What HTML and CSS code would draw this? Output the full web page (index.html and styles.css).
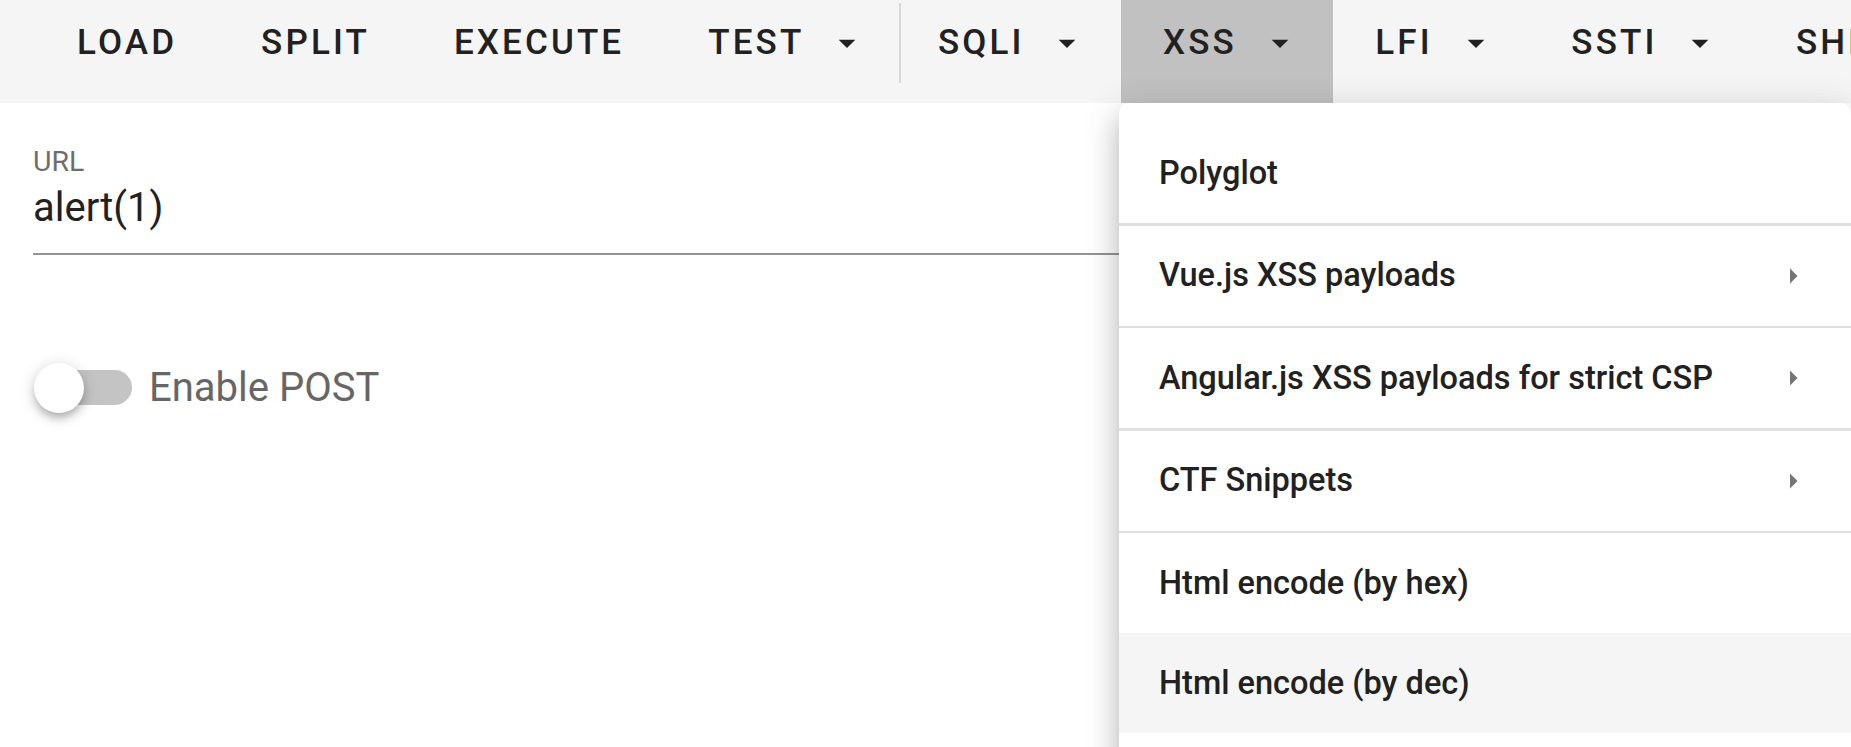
FILE: index.html
```html
<!DOCTYPE html>
<html lang="en">
<head>
<meta charset="utf-8">
<title>HackBar</title>
<link rel="stylesheet" href="styles.css">
</head>
<body>
<header class="toolbar">
  <button class="tb-btn">Load</button>
  <button class="tb-btn">Split</button>
  <button class="tb-btn">Execute</button>
  <button class="tb-btn">Test<svg class="tb-icon" viewBox="0 0 24 24"><path d="M7 10l5 5 5-5z"/></svg></button>
  <div class="tb-divider"></div>
  <button class="tb-btn">SQLI<svg class="tb-icon" viewBox="0 0 24 24"><path d="M7 10l5 5 5-5z"/></svg></button>
  <button class="tb-btn tb-btn--active">XSS<svg class="tb-icon" viewBox="0 0 24 24"><path d="M7 10l5 5 5-5z"/></svg></button>
  <button class="tb-btn">LFI<svg class="tb-icon" viewBox="0 0 24 24"><path d="M7 10l5 5 5-5z"/></svg></button>
  <button class="tb-btn">SSTI<svg class="tb-icon" viewBox="0 0 24 24"><path d="M7 10l5 5 5-5z"/></svg></button>
  <button class="tb-btn">Shell<svg class="tb-icon" viewBox="0 0 24 24"><path d="M7 10l5 5 5-5z"/></svg></button>
</header>

<main class="content">
  <div class="field">
    <div class="field-label">URL</div>
    <div class="field-input">alert(1)</div>
  </div>
  <div class="switch-row">
    <div class="switch">
      <div class="switch-track"></div>
      <div class="switch-thumb"></div>
    </div>
    <span class="switch-label">Enable POST</span>
  </div>
</main>

<div class="menu">
  <div class="menu-item"><span class="menu-label">Polyglot</span></div>
  <div class="menu-divider"></div>
  <div class="menu-item"><span class="menu-label">Vue.js XSS payloads</span><svg class="menu-arrow" viewBox="0 0 24 24"><path d="M10 17l5-5-5-5v10z"/></svg></div>
  <div class="menu-divider"></div>
  <div class="menu-item"><span class="menu-label">Angular.js XSS payloads for strict CSP</span><svg class="menu-arrow" viewBox="0 0 24 24"><path d="M10 17l5-5-5-5v10z"/></svg></div>
  <div class="menu-divider"></div>
  <div class="menu-item"><span class="menu-label">CTF Snippets</span><svg class="menu-arrow" viewBox="0 0 24 24"><path d="M10 17l5-5-5-5v10z"/></svg></div>
  <div class="menu-divider"></div>
  <div class="menu-item"><span class="menu-label">Html encode (by hex)</span></div>
  <div class="menu-item menu-item--hover"><span class="menu-label">Html encode (by dec)</span></div>
</div>
</body>
</html>
```

FILE: styles.css
```css
html, body {
  margin: 0;
  padding: 0;
}

body {
  width: 1851px;
  height: 747px;
  overflow: hidden;
  position: relative;
  background: #ffffff;
  font-family: Roboto, "Liberation Sans", sans-serif;
  color: #212121;
}

/* ---------- toolbar ---------- */
.toolbar {
  display: flex;
  align-items: flex-start;
  height: 103px;
  padding-left: 35px;
  background: #f5f5f5;
  overflow: hidden;
  white-space: nowrap;
}

.tb-btn {
  display: flex;
  align-items: center;
  flex: none;
  height: 103px;
  margin: 0;
  padding: 0 42px 18px;
  box-sizing: border-box;
  border: 0;
  background: transparent;
  font-family: Roboto, "Liberation Sans", sans-serif;
  font-weight: 500;
  font-size: 35px;
  line-height: 1;
  letter-spacing: 0.0892em;
  text-transform: uppercase;
  color: #212121;
}

.tb-btn--active {
  background: #c1c1c1;
}

.tb-icon {
  flex: none;
  width: 40px;
  height: 40px;
  margin-left: 23px;
  margin-right: -8.5px;
  fill: #212121;
}

.tb-divider {
  flex: none;
  width: 2px;
  height: 80px;
  margin: 3px -5px 0 -2px;
  background: #dadada;
}

/* ---------- main form ---------- */
.content {
  padding: 45px 33px 0;
}

.field-label {
  font-size: 28.5px;
  line-height: 1;
  color: #6e6e6e;
}

.field-input {
  margin-top: 11.5px;
  padding-bottom: 25px;
  border-bottom: 2px solid #949494;
  font-size: 40px;
  line-height: 1;
  color: #212121;
}

.switch-row {
  display: flex;
  align-items: center;
  margin-top: 107.7px;
}

.switch {
  position: relative;
  flex: none;
  width: 98px;
  height: 50px;
  margin-left: 1px;
}

.switch-track {
  position: absolute;
  left: 8px;
  top: 7.5px;
  width: 90px;
  height: 35px;
  border-radius: 17.5px;
  background: #c4c4c4;
}

.switch-thumb {
  position: absolute;
  left: 0;
  top: 0;
  width: 50px;
  height: 50px;
  border-radius: 50%;
  background: #ffffff;
  box-shadow: 0 6px 9px -2px rgba(0, 0, 0, 0.25), 0 3px 14px 3px rgba(0, 0, 0, 0.12);
}

.switch-label {
  margin-left: 17px;
  font-size: 40px;
  line-height: 1;
  color: #666666;
}

/* ---------- dropdown menu ---------- */
.menu {
  position: absolute;
  left: 1119px;
  top: 103px;
  z-index: 2;
  width: 732px;
  padding: 20px 0 80px;
  background: #ffffff;
  border-radius: 10px;
  box-shadow: 0 12px 12px -7px rgba(0, 0, 0, 0.2),
              0 20px 25px 2px rgba(0, 0, 0, 0.14),
              0 7px 35px 5px rgba(0, 0, 0, 0.12);
}

.menu-item {
  display: flex;
  align-items: center;
  height: 100px;
  padding: 0 40px;
  font-weight: 500;
  font-size: 32.5px;
  line-height: 1;
  color: #212121;
}

.menu-item--hover {
  background: #f5f5f5;
}

.menu-label {
  flex: 1;
  white-space: nowrap;
}

.menu-arrow {
  flex: none;
  width: 36px;
  height: 36px;
  fill: #757575;
}

.menu-divider {
  height: 2.5px;
  background: #e0e0e0;
}
```
